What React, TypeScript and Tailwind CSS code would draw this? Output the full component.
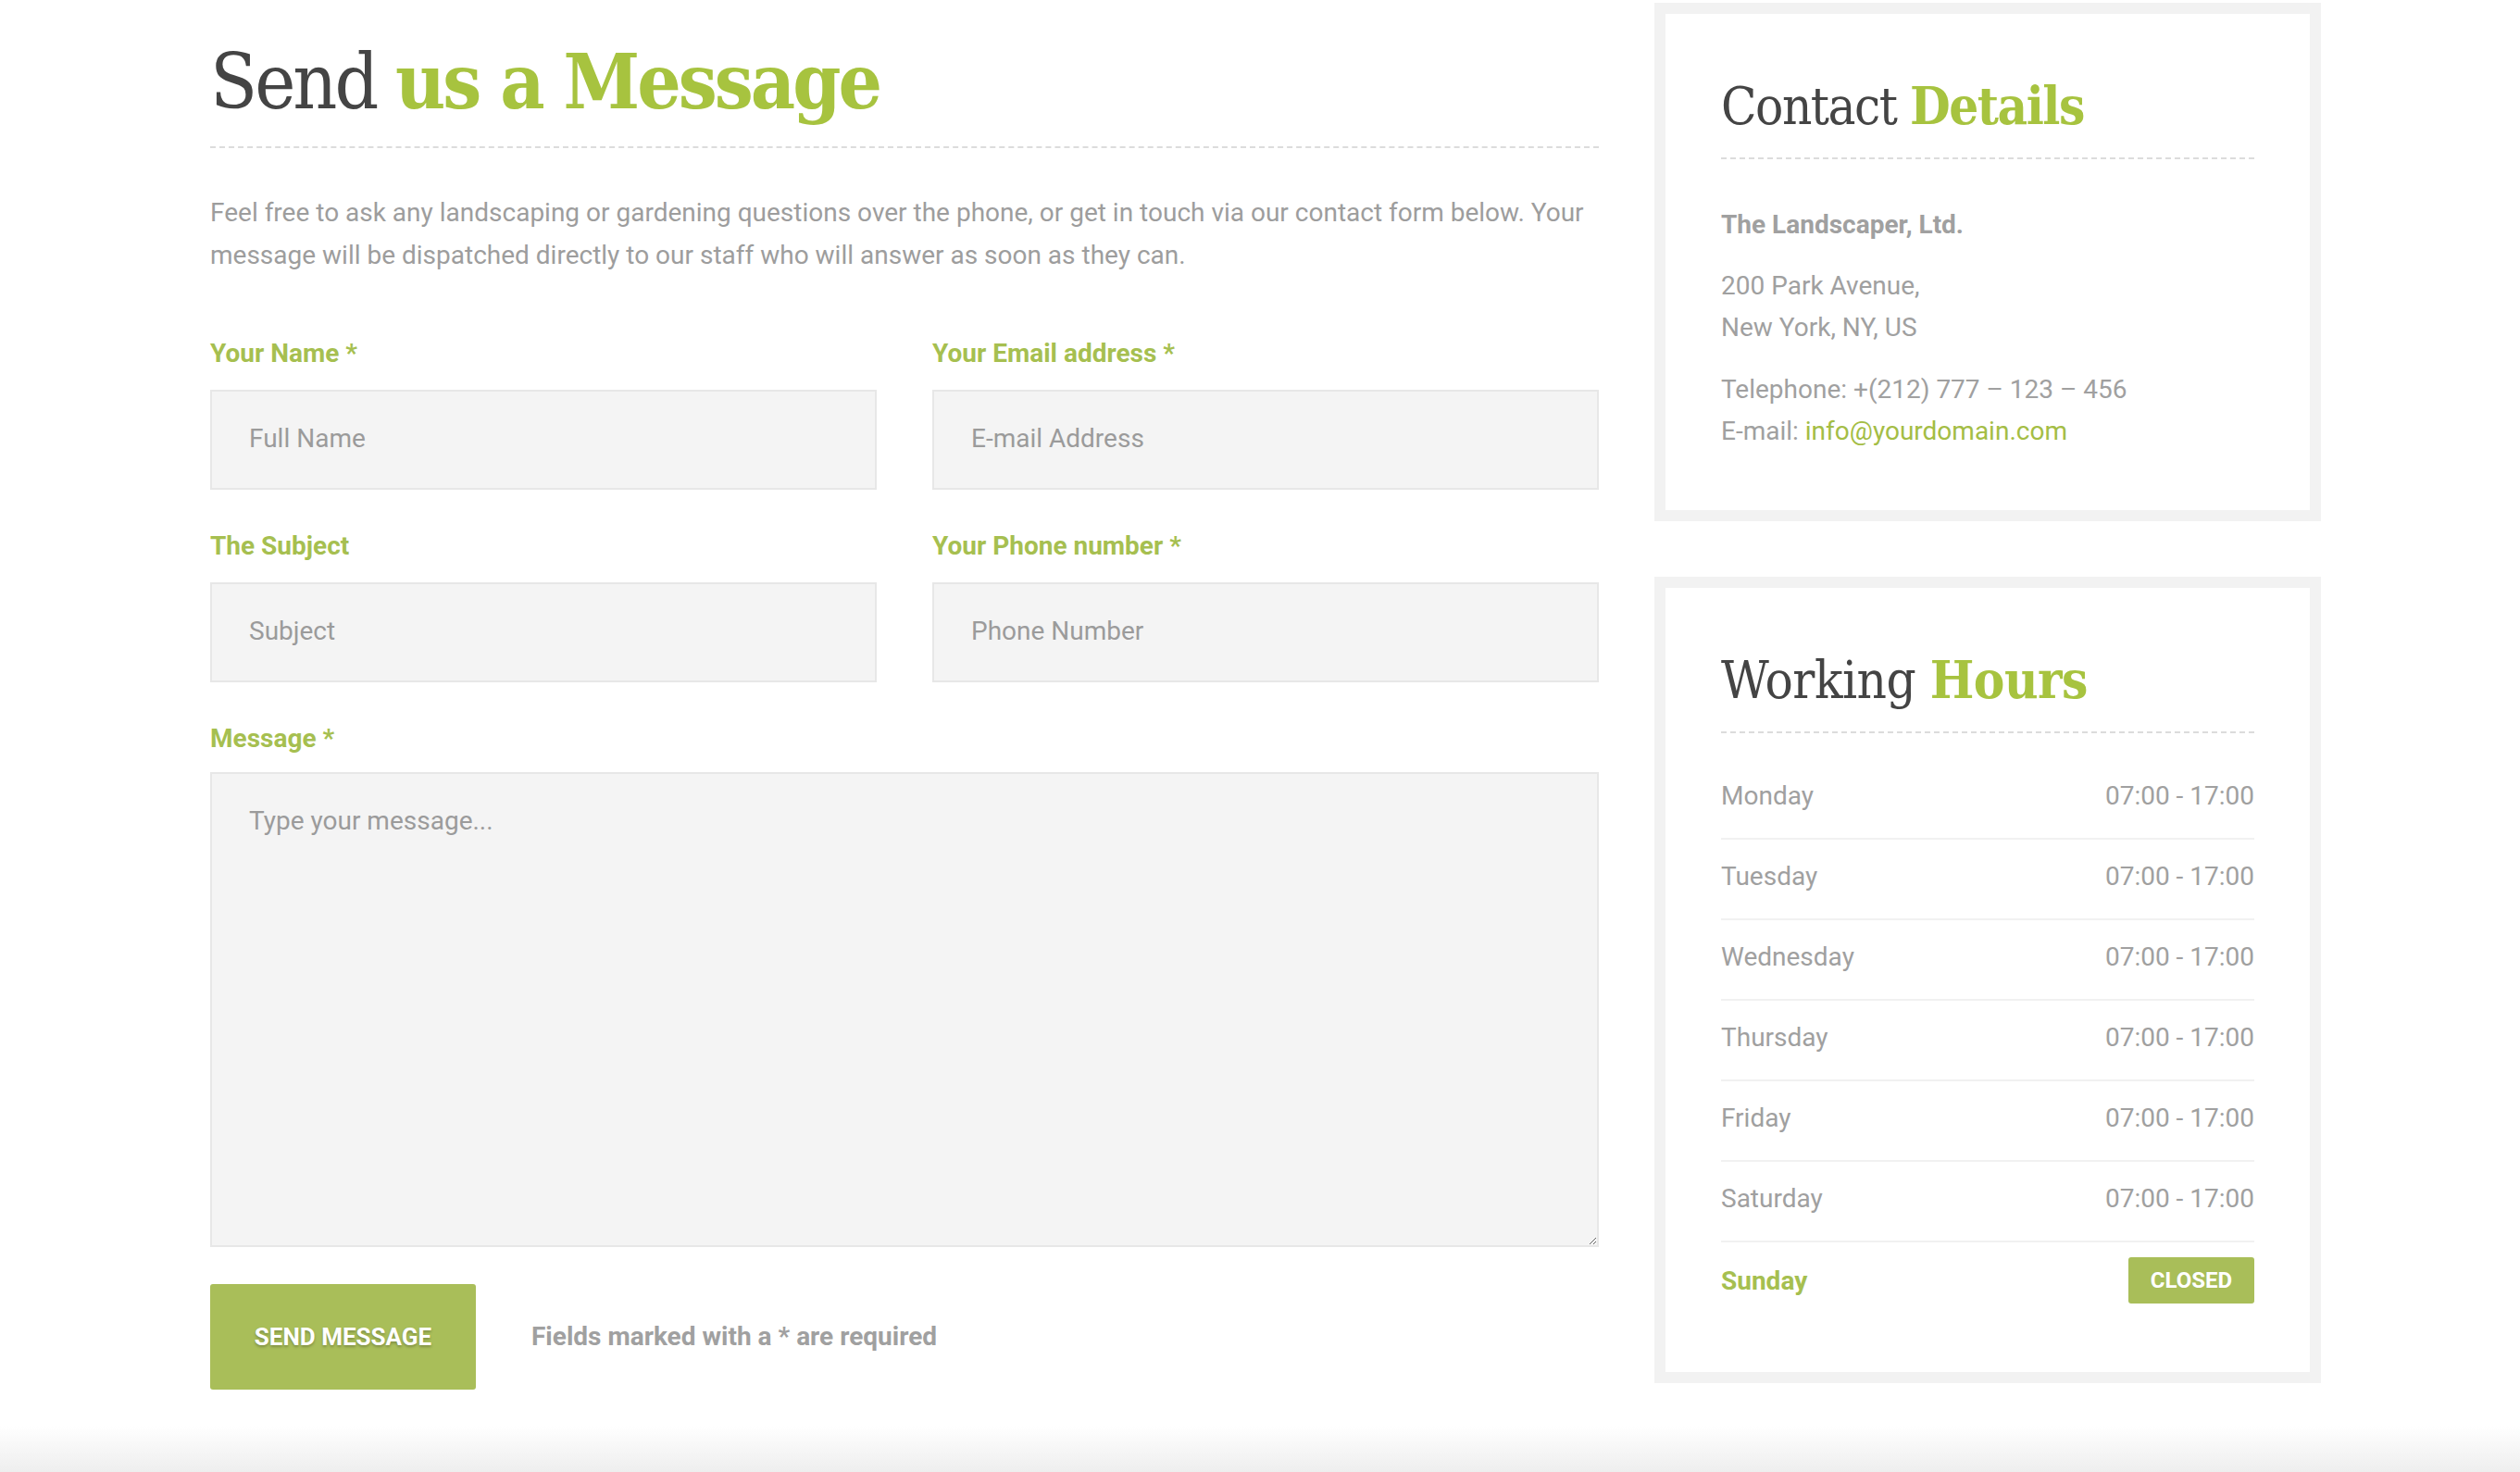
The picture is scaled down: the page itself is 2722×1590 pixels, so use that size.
import React from "react";

const hours = [
  { day: "Monday", time: "07:00 - 17:00" },
  { day: "Tuesday", time: "07:00 - 17:00" },
  { day: "Wednesday", time: "07:00 - 17:00" },
  { day: "Thursday", time: "07:00 - 17:00" },
  { day: "Friday", time: "07:00 - 17:00" },
  { day: "Saturday", time: "07:00 - 17:00" },
];

function Label({ children }: { children: React.ReactNode }) {
  return (
    <label className="block text-[28px] leading-[45px] font-bold text-[#a6bf50] mt-[1px] mb-[17px]">
      {children}
    </label>
  );
}

function Field({ label, placeholder }: { label: string; placeholder: string }) {
  return (
    <div>
      <Label>{label}</Label>
      <input
        type="text"
        placeholder={placeholder}
        className="block w-full h-[108px] bg-[#f4f4f4] border-2 border-[#e7e7e7] px-[40px] pb-[3px] text-[28px] text-[#777] placeholder:text-[#9b9b9b] outline-none"
      />
    </div>
  );
}

export default function App() {
  return (
    <div className="w-full h-[1590px] bg-white flex flex-col font-['Roboto','Liberation_Sans',sans-serif] overflow-hidden">
      <div className="flex pl-[227px] pt-[3px]">
        {/* Left column */}
        <div className="w-[1500px]">
          <h1 className="mt-[35px] pb-[19px] border-b-2 border-dashed border-[#dcdcdc] text-[83px] leading-[100px] text-[#444] font-['Roboto_Slab','DejaVu_Serif_Condensed','DejaVu_Serif',serif] [font-stretch:condensed] tracking-[-3px]">
            <span className="font-normal">Send </span>
            <span className="font-bold text-[#a7c33f]">us a Message</span>
          </h1>
          <p className="mt-[47px] text-[28px] leading-[46px] text-[#9d9d9d]">
            Feel free to ask any landscaping or gardening questions over the phone, or get in touch via our contact form below. Your message will be dispatched directly to our staff who will answer as soon as they can.
          </p>
          <div className="mt-[59px] grid grid-cols-2 gap-x-[60px] gap-y-[37px]">
            <Field label="Your Name *" placeholder="Full Name" />
            <Field label="Your Email address *" placeholder="E-mail Address" />
            <Field label="The Subject" placeholder="Subject" />
            <Field label="Your Phone number *" placeholder="Phone Number" />
          </div>
          <div className="mt-[38px]">
            <label className="block text-[28px] leading-[45px] font-bold text-[#a6bf50] mt-[1px] mb-[14px]">
              Message *
            </label>
            <textarea
              placeholder="Type your message..."
              className="block w-full h-[513px] bg-[#f4f4f4] border-2 border-[#e7e7e7] px-[40px] pt-[28px] text-[28px] leading-[45px] text-[#777] placeholder:text-[#9b9b9b] outline-none"
            />
          </div>
          <div className="mt-[40px] flex items-center">
            <button className="w-[287px] h-[114px] bg-[#a9be59] rounded-[3px] text-white text-[26px] font-bold uppercase [text-shadow:0_2px_3px_rgba(0,0,0,0.25)]">
              Send Message
            </button>
            <span className="ml-[60px] text-[28px] font-bold text-[#a0a0a0]">
              Fields marked with a * are required
            </span>
          </div>
        </div>

        {/* Right column */}
        <div className="w-[720px] ml-[60px]">
          <div className="border-[12px] border-[#f2f2f2] bg-white px-[60px] pt-[68px] pb-[63px]">
            <h2 className="pb-[24px] border-b-2 border-dashed border-[#dcdcdc] text-[56px] leading-[62px] text-[#444] font-['Roboto_Slab','DejaVu_Serif_Condensed','DejaVu_Serif',serif] [font-stretch:condensed] tracking-[-1.5px]">
              <span className="font-normal">Contact </span>
              <span className="font-bold text-[#a7c33f]">Details</span>
            </h2>
            <div className="mt-[48px] text-[28px] leading-[45px] text-[#a0a0a0]">
              <p className="font-bold">The Landscaper, Ltd.</p>
              <p className="mt-[21px]">
                200 Park Avenue,
                <br />
                New York, NY, US
              </p>
              <p className="mt-[22px]">
                Telephone: +(212) 777 – 123 – 456
                <br />
                E-mail: <span className="text-[#a4bd45]">info@yourdomain.com</span>
              </p>
            </div>
          </div>

          <div className="mt-[60px] border-[12px] border-[#f2f2f2] bg-white px-[60px] pt-[68px] pb-[50px]">
            <h2 className="pb-[24px] border-b-2 border-dashed border-[#dcdcdc] text-[56px] leading-[62px] text-[#444] font-['Roboto_Slab','DejaVu_Serif_Condensed','DejaVu_Serif',serif] [font-stretch:condensed] tracking-[-0.5px]">
              <span className="font-normal">Working </span>
              <span className="font-bold text-[#a7c33f]">Hours</span>
            </h2>
            <ul className="mt-[28px] text-[28px] leading-[45px] text-[#a0a0a0]">
              {hours.map((h) => (
                <li
                  key={h.day}
                  className="flex justify-between pt-[17px] pb-[23px] border-b-2 border-[#f1f1f1]"
                >
                  <span>{h.day}</span>
                  <span>{h.time}</span>
                </li>
              ))}
              <li className="flex justify-between items-center pt-[16px] pb-[24px]">
                <span className="font-bold text-[#a6bf50]">Sunday</span>
                <span className="w-[136px] h-[50px] flex items-center justify-center bg-[#a9be59] rounded-[3px] text-white text-[24px] font-bold leading-none">
                  CLOSED
                </span>
              </li>
            </ul>
          </div>
        </div>
      </div>
      <div className="flex-1" />
      <div className="h-[50px] bg-linear-to-b from-white to-[#eeeeee]" />
    </div>
  );
}
